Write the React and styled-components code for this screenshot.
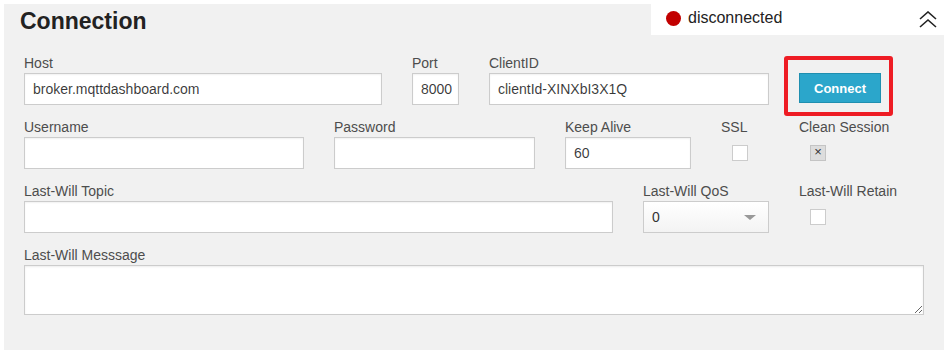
import React from 'react';
import styled, { createGlobalStyle } from 'styled-components';

const GlobalStyle = createGlobalStyle`
  html, body {
    margin: 0;
    padding: 0;
    background: #fff;
  }
  *, *::before, *::after {
    box-sizing: border-box;
  }
`;

const Page = styled.div`
  position: relative;
  width: 948px;
  height: 353px;
  padding: 4px;
  font-family: "Liberation Sans", Arial, sans-serif;
`;

const Panel = styled.section`
  background: #f1f1f1;
  height: 346px;
  padding-top: 4px;
`;

const Title = styled.h2`
  margin: 0 0 21px 16px;
  font-size: 23px;
  line-height: 26px;
  font-weight: 700;
  color: #222;
`;

const StatusTab = styled.div`
  position: absolute;
  top: 0;
  right: 0;
  width: 297px;
  height: 35px;
  background: #fff;
  display: flex;
  align-items: center;
  padding: 0 11px 0 15px;
`;

const Dot = styled.span`
  width: 15px;
  height: 15px;
  border-radius: 50%;
  background: #c20000;
  margin-right: 7px;
  margin-top: 2px;
`;

const StatusText = styled.span`
  flex: 1;
  font-size: 16px;
  color: #222;
  margin-top: 1px;
`;

const Toggle = styled.svg`
  width: 18px;
  height: 17px;
  margin-top: 3px;
`;

const Row = styled.div`
  display: flex;
  padding: 0 5px;
  margin-bottom: 14px;
`;

const Col = styled.div`
  flex: ${p => (p.$w ? `0 0 ${p.$w}px` : '1 1 auto')};
  padding: 0 15px;
  position: relative;
`;

const Label = styled.label`
  display: block;
  font-size: 14px;
  line-height: 17px;
  margin-bottom: 1px;
  color: #4d4d4d;
  white-space: nowrap;
`;

const TextInput = styled.input`
  display: block;
  width: 100%;
  height: 32px;
  padding: 0 3px 0 8px;
  border: 1px solid #ccc;
  background: #fff;
  box-shadow: inset 0 1px 2px rgba(0, 0, 0, 0.06);
  font-family: "Liberation Sans", Arial, sans-serif;
  font-size: 14px;
  color: rgba(0, 0, 0, 0.78);
  outline: none;
`;

const TextArea = styled.textarea`
  display: block;
  width: 100%;
  height: 50px;
  padding: 6px 8px;
  border: 1px solid #ccc;
  background: #fff;
  box-shadow: inset 0 1px 2px rgba(0, 0, 0, 0.08);
  font-family: "Liberation Sans", Arial, sans-serif;
  font-size: 14px;
  resize: vertical;
  outline: none;
`;

const Select = styled.div`
  position: relative;
  height: 32px;
  border: 1px solid #ccc;
  background: linear-gradient(#fff, #f3f3f3);
  display: flex;
  align-items: center;
  padding: 0 8px;
  font-size: 14px;
  color: #333;

  &::after {
    content: '';
    position: absolute;
    right: 12px;
    top: 13px;
    border-left: 6px solid transparent;
    border-right: 6px solid transparent;
    border-top: 5px solid #999;
  }
`;

const Check = styled.span`
  display: flex;
  justify-content: center;
  width: 16px;
  height: 16px;
  margin: 9px 0 0 11px;
  border: 1px solid ${p => (p.$checked ? '#c4c4c4' : '#ccc')};
  background: ${p => (p.$checked ? '#ddd' : '#fff')};
  font-size: 13px;
  line-height: 11px;
  color: #333;
`;

const Highlight = styled.div`
  position: relative;
  width: 82px;
  margin-top: 18px;

  &::before {
    content: '';
    position: absolute;
    left: -15px;
    top: -17px;
    width: 109px;
    height: 60px;
    border: 4px solid #ee1c24;
    border-radius: 3px;
  }
`;

const ConnectButton = styled.button`
  display: block;
  width: 82px;
  height: 30px;
  border: 1px solid #1f8fb0;
  background: #2ba6cb;
  color: #fff;
  font-family: "Liberation Sans", Arial, sans-serif;
  font-size: 13px;
  font-weight: 700;
  cursor: pointer;
`;

export default function App() {
  return (
    <>
      <GlobalStyle />
      <Page>
        <Panel>
          <Title>Connection</Title>

          <Row>
            <Col $w={388}>
              <Label>Host</Label>
              <TextInput defaultValue="broker.mqttdashboard.com" />
            </Col>
            <Col $w={77}>
              <Label>Port</Label>
              <TextInput defaultValue="8000" />
            </Col>
            <Col $w={310}>
              <Label>ClientID</Label>
              <TextInput defaultValue="clientId-XINXbI3X1Q" />
            </Col>
            <Col>
              <Highlight>
                <ConnectButton>Connect</ConnectButton>
              </Highlight>
            </Col>
          </Row>

          <Row>
            <Col $w={310}>
              <Label>Username</Label>
              <TextInput />
            </Col>
            <Col $w={231}>
              <Label>Password</Label>
              <TextInput type="password" />
            </Col>
            <Col $w={156}>
              <Label>Keep Alive</Label>
              <TextInput defaultValue="60" />
            </Col>
            <Col $w={78}>
              <Label>SSL</Label>
              <Check />
            </Col>
            <Col>
              <Label>Clean Session</Label>
              <Check $checked>×</Check>
            </Col>
          </Row>

          <Row>
            <Col $w={619}>
              <Label>Last-Will Topic</Label>
              <TextInput />
            </Col>
            <Col $w={156}>
              <Label>Last-Will QoS</Label>
              <Select>0</Select>
            </Col>
            <Col>
              <Label>Last-Will Retain</Label>
              <Check />
            </Col>
          </Row>

          <Row>
            <Col>
              <Label>Last-Will Messsage</Label>
              <TextArea />
            </Col>
          </Row>
        </Panel>

        <StatusTab>
          <Dot />
          <StatusText>disconnected</StatusText>
          <Toggle viewBox="0 0 18 17" fill="none" stroke="#222" strokeWidth="1.6">
            <polyline points="1,8 9,1 17,8" />
            <polyline points="1,16 9,9 17,16" />
          </Toggle>
        </StatusTab>
      </Page>
    </>
  );
}
